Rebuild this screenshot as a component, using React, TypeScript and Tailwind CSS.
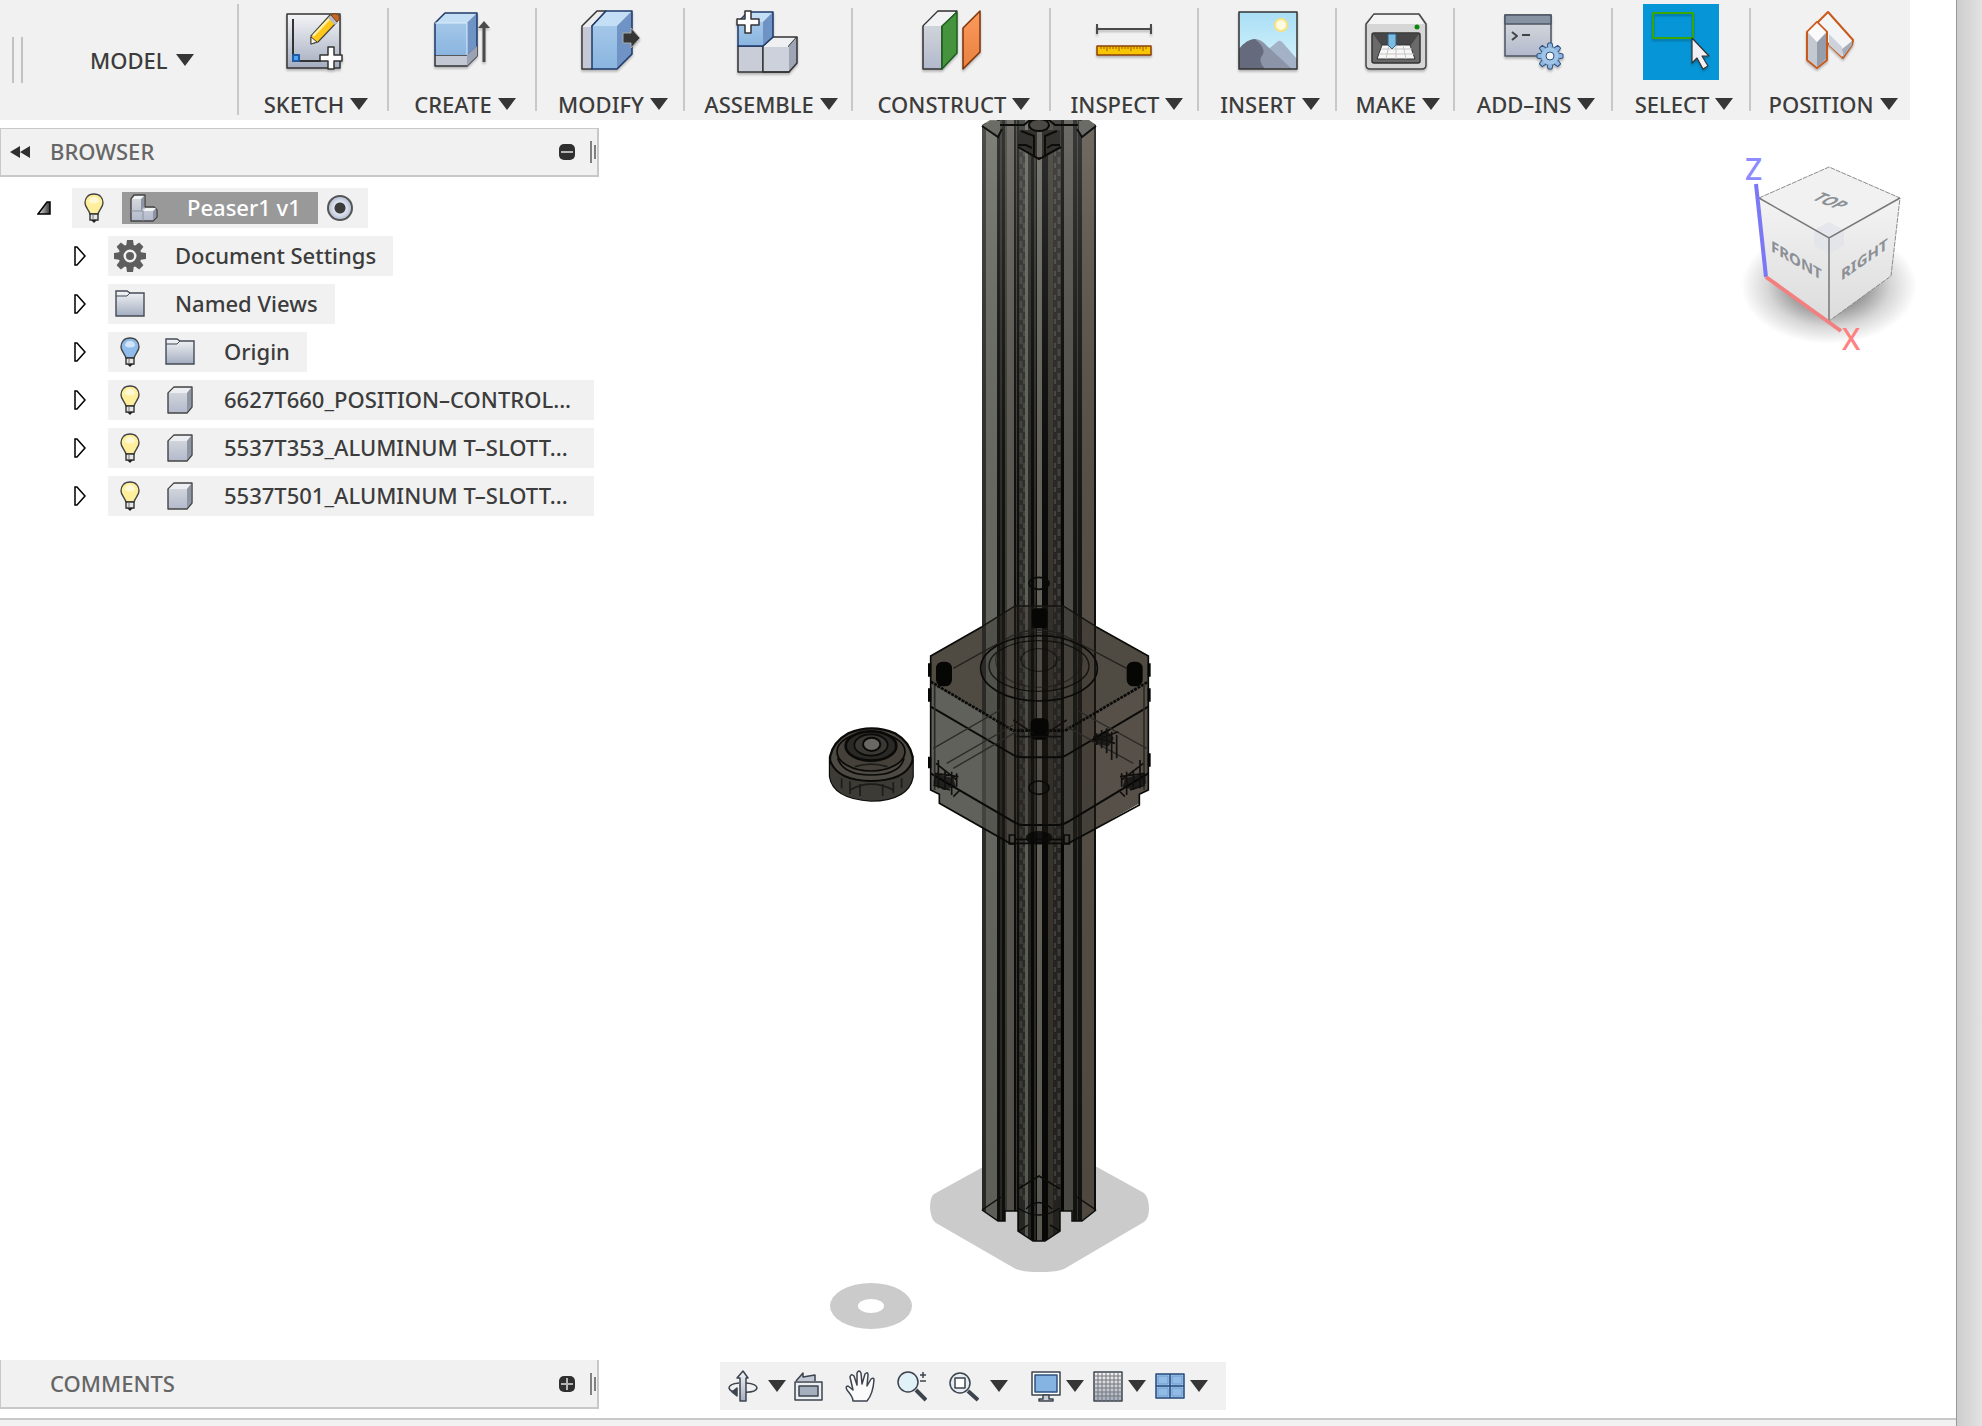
// App.tsx

import type { ReactNode } from "react";

type IconProps = {
  className?: string;
};

type Tool = {
  label: string;
  width: string;
  icon: ReactNode;
  active?: boolean;
};

type TreeRow = {
  label: string;
  icons: ReactNode;
  wide?: boolean;
};

/* =========================================
   SHARED PIECES
========================================= */

function Arrow() {
  return (
    <svg width="18" height="12" viewBox="0 0 18 12" className="shrink-0">
      <path d="M0 0H18L9 12Z" fill="#363636" />
    </svg>
  );
}

function Defs() {
  return (
    <svg width="0" height="0" className="absolute">
      <defs>
        <linearGradient id="steel" x1="0" y1="0" x2="0" y2="1">
          <stop offset="0" stopColor="#f4f5f7" />
          <stop offset="1" stopColor="#a3adc0" />
        </linearGradient>
        <linearGradient id="silver" x1="0" y1="0" x2="0" y2="1">
          <stop offset="0" stopColor="#dadddf" />
          <stop offset="1" stopColor="#b2b9cc" />
        </linearGradient>
        <linearGradient id="blue" x1="0" y1="0" x2="0" y2="1">
          <stop offset="0" stopColor="#a3c7e8" />
          <stop offset="1" stopColor="#8ab5e0" />
        </linearGradient>
        <linearGradient id="sky" x1="0" y1="0" x2="0" y2="1">
          <stop offset="0" stopColor="#a9def5" />
          <stop offset="1" stopColor="#d8f5fc" />
        </linearGradient>
        <linearGradient id="orange" x1="0" y1="0" x2="0" y2="1">
          <stop offset="0" stopColor="#fb9a5d" />
          <stop offset="1" stopColor="#e8803f" />
        </linearGradient>
        <linearGradient id="caret" x1="0" y1="0" x2="1" y2="0">
          <stop offset="0" stopColor="#eeeeee" />
          <stop offset="1" stopColor="#333333" />
        </linearGradient>
        <linearGradient id="shade" x1="0" y1="0" x2="0" y2="1">
          <stop offset="0" stopColor="#ffffff" stopOpacity="0.16" />
          <stop offset="0.5" stopColor="#000000" stopOpacity="0" />
          <stop offset="1" stopColor="#000000" stopOpacity="0.1" />
        </linearGradient>
        <linearGradient id="face" x1="0" y1="0" x2="0" y2="1">
          <stop offset="0" stopColor="#f3f3f3" />
          <stop offset="1" stopColor="#dcdcdc" />
        </linearGradient>
        <radialGradient id="cubeShadow">
          <stop offset="0.3" stopColor="#000000" stopOpacity="0.5" />
          <stop offset="0.7" stopColor="#000000" stopOpacity="0.16" />
          <stop offset="1" stopColor="#000000" stopOpacity="0" />
        </radialGradient>
      </defs>
    </svg>
  );
}

function Big({ children }: { children: ReactNode }) {
  return (
    <svg
      width="76"
      height="76"
      viewBox="0 0 76 76"
      strokeLinejoin="round"
      className="drop-shadow-[0_2px_1px_rgba(0,0,0,0.25)]"
    >
      {children}
    </svg>
  );
}

function Plus({ x, y }: { x: number; y: number }) {
  return (
    <path
      transform={`translate(${x} ${y})`}
      d="M-3-11H3V-3H11V3H3V11H-3V3H-11V-3H-3Z"
      fill="#fff"
      stroke="#333"
      strokeWidth="1.5"
    />
  );
}

/* =========================================
   TOOLBAR ICONS
========================================= */

const sketchIcon = (
  <Big>
    <path d="M12 10H65V64H12Z" fill="url(#steel)" stroke="#333" strokeWidth="1.5" />
    <path d="M18 15V57H46" fill="none" stroke="#333" strokeWidth="2" />
    <path d="M18 51H24V57H18Z" fill="#4fa3f5" stroke="#1d5ca3" strokeWidth="2" />
    <path d="M36 32L55 11L62 18L43 38L36 40Z" fill="#ffc61a" stroke="#444" strokeWidth="1.2" />
    <path d="M38 32L55 14" stroke="#fff3a5" strokeWidth="2.5" />
    <path d="M36 33L42 38L36 40Z" fill="#f5f2dd" stroke="#444" />
    <path d="M53 14L56 11L63 18L60 21Z" fill="#b8bcc4" />
    <path d="M56 11Q61 8 64 12Q66 15 62 18Z" fill="#c6682a" stroke="#7a3c13" />
    <Plus x={56} y={54} />
  </Big>
);

const createIcon = (
  <Big>
    <path d="M11 51H43L53 42V52L43 62H11Z" fill="#c3c7d4" stroke="#333" strokeWidth="1.5" />
    <path d="M43 51L53 42V52L43 62Z" fill="#9ba2b3" />
    <path d="M11 19H43V51H11Z" fill="url(#blue)" />
    <path d="M11 19L21 9H53L43 19Z" fill="#c4def5" />
    <path d="M43 19L53 9V42L43 51Z" fill="#6f93c4" />
    <path d="M11 51V19L21 9H53V42" fill="none" stroke="#1d3a6b" strokeWidth="1.5" />
    <path d="M11 19H43V51" fill="none" stroke="#ddeefa" />
    <path d="M60 58V20" stroke="#4a4a4a" strokeWidth="3" />
    <path d="M54 24L60 17L66 24Z" fill="#4a4a4a" />
  </Big>
);

const modifyIcon = (
  <Big>
    <path d="M10 22L25 7H34L20 22V65H10Z" fill="#ececee" stroke="#333" strokeWidth="1.5" />
    <path d="M11 23H20V64H11Z" fill="#c5c9d5" />
    <path d="M20 22H45V65H20Z" fill="url(#blue)" />
    <path d="M20 22L34 7H60L45 22Z" fill="#c4def5" />
    <path d="M45 22L60 7V50L45 65Z" fill="#6f93c4" />
    <path d="M20 65V22L34 7H60V50L45 65Z" fill="none" stroke="#1d3a6b" strokeWidth="1.5" />
    <path d="M51 29H59V24L68 34L59 44V39H51Z" fill="#363636" stroke="#aaa" strokeWidth="1" />
  </Big>
);

const assembleIcon = (
  <Big>
    <path d="M8 42H33V68H8Z" fill="#c9cdd8" stroke="#333" strokeWidth="1.5" />
    <path d="M33 42L43 33H67L59 42V68H33Z" fill="#eef0f2" stroke="#333" strokeWidth="1.5" />
    <path d="M34 43H59V67H34Z" fill="#cdd1db" />
    <path d="M59 42L67 33V59L59 68Z" fill="#9ea6b5" />
    <path d="M33 68H59L67 59V33" fill="none" stroke="#333" strokeWidth="1.5" />
    <path d="M8 18H33V42H8Z" fill="url(#blue)" />
    <path d="M8 18L18 8H43L33 18Z" fill="#c4def5" />
    <path d="M33 18L43 8V33L33 42Z" fill="#6f93c4" />
    <path d="M8 18V42H33L43 33V8H18Z" fill="none" stroke="#1d3a6b" strokeWidth="1.5" />
    <Plus x={18} y={18} />
  </Big>
);

const constructIcon = (
  <Big>
    <path d="M10 22L25 7H44L29 22V65H10Z" fill="url(#silver)" stroke="#333" strokeWidth="1.5" />
    <path d="M11 22L25 8H43L29 22Z" fill="#f0f2f3" />
    <path d="M29 22L44 8V49L29 65Z" fill="#45933c" stroke="#1c5c1c" strokeWidth="1.5" />
    <path d="M50 24L67 7V48L50 65Z" fill="url(#orange)" stroke="#7d3208" strokeWidth="1.5" />
  </Big>
);

const inspectIcon = (
  <Big>
    <path d="M11 20V30M65 20V30M11 25H65" stroke="#4a4a4a" strokeWidth="2" />
    <path d="M11 42H65V51H11Z" fill="#f7c600" stroke="#8c3f08" strokeWidth="1.5" />
    <path
      d="M15 42V45M18 42V45M21 42V47M24 42V45M27 42V45M30 42V45M33 42V47M36 42V45M39 42V45M42 42V45M45 42V47M48 42V45M51 42V45M54 42V45M57 42V47M60 42V45"
      stroke="#9a5a00"
    />
  </Big>
);

const insertIcon = (
  <Big>
    <path d="M10 8H68V65H10Z" fill="url(#sky)" />
    <circle cx="52" cy="21" r="6" fill="#fffbe0" stroke="#fce27d" strokeWidth="2" />
    <path d="M36 48L48 38Q51 35 54 39L68 55V65H50Z" fill="#a4b2c7" />
    <path d="M10 45Q18 35 26 35Q32 35 38 42L63 65H10Z" fill="#8c95a8" />
    <path d="M10 45Q18 35 26 35Q37 44 34 50Q28 57 36 65H10Z" fill="#656a7c" />
    <path d="M10 8H68V65H10Z" fill="none" stroke="#333" strokeWidth="1.5" />
  </Big>
);

const makeIcon = (
  <Big>
    <path d="M17 10H62L69 20V61Q69 65 65 65H13Q9 65 9 61V20Z" fill="#d6d6d6" stroke="#444" strokeWidth="1.5" />
    <path d="M17 11H61L67 20H11Z" fill="#f4f4f4" />
    <rect x="15" y="29" width="48" height="30" rx="2" fill="#6a6a6a" stroke="#333" strokeWidth="1.5" />
    <path d="M16 30H62L54 41H24Z" fill="#474747" />
    <path d="M25 41H53L58 55H20Z" fill="#f7f7f7" stroke="#333" />
    <path d="M24 45H55M22 50H57M32 41L29 55M39 41V55M46 41L49 55" stroke="#c5c5c5" />
    <path d="M31 30H39V41L35 45L31 41Z" fill="#7cbce0" stroke="#2a6593" />
    <circle cx="60" cy="23" r="2.5" fill="#0b870b" />
  </Big>
);

const teeth = [0, 45, 90, 135, 180, 225, 270, 315];

const addinsIcon = (
  <Big>
    <path d="M10 11H56V52H10Z" fill="url(#silver)" stroke="#4d5563" strokeWidth="1.5" />
    <path d="M10 11H56V20H10Z" fill="#8792a3" stroke="#4d5563" strokeWidth="1.5" />
    <path d="M17 28L22 32L17 36" fill="none" stroke="#444" strokeWidth="2" />
    <path d="M27 31H35" stroke="#444" strokeWidth="2" />
    <g transform="translate(55 52)">
      {teeth.map((angle) => (
        <path
          key={angle}
          d="M-3-8L-2-13H2L3-8Z"
          fill="#8fb6de"
          stroke="#2c5280"
          transform={`rotate(${angle})`}
        />
      ))}
      <circle r="9" fill="#9fc4e8" />
      <circle r="4" fill="#f4f6f8" stroke="#2c5280" />
    </g>
  </Big>
);

const selectIcon = (
  <Big>
    <path d="M10 9H50V34H10Z" fill="none" stroke="#38a800" strokeWidth="2" />
    <path d="M49 34L66 52H59L65 62L60 65L54 54L49 59Z" fill="#f0f0f4" stroke="#333" strokeWidth="1.2" />
  </Big>
);

const positionIcon = (
  <Big>
    <path d="M26 18L36 8L61 36L60 41L51 54L26 30Z" fill="#f3f4f6" stroke="#c9591a" strokeWidth="2" />
    <path d="M37 30L50 43V53L37 41Z" fill="#ced2da" />
    <path d="M50 45L60 37V41L51 53Z" fill="#a7aebb" />
    <path d="M15 28L25 18L35 28V56L25 64L15 56Z" fill="#e4e6ea" stroke="#c9591a" strokeWidth="2" />
    <path d="M16 29L25 38V63L16 55Z" fill="#c3c8d1" />
    <path d="M34 29L25 38V63L34 55Z" fill="#959dab" />
    <path d="M16 28L25 19L34 28L25 38Z" fill="#fafafa" />
  </Big>
);

const tools: Tool[] = [
  { label: "SKETCH", width: "w-[150px]", icon: sketchIcon },
  { label: "CREATE", width: "w-[148px]", icon: createIcon },
  { label: "MODIFY", width: "w-[148px]", icon: modifyIcon },
  { label: "ASSEMBLE", width: "w-[168px]", icon: assembleIcon },
  { label: "CONSTRUCT", width: "w-[198px]", icon: constructIcon },
  { label: "INSPECT", width: "w-[148px]", icon: inspectIcon },
  { label: "INSERT", width: "w-[138px]", icon: insertIcon },
  { label: "MAKE", width: "w-[118px]", icon: makeIcon },
  { label: "ADD–INS", width: "w-[158px]", icon: addinsIcon },
  { label: "SELECT", width: "w-[138px]", icon: selectIcon, active: true },
  { label: "POSITION", width: "w-[160px]", icon: positionIcon },
];

/* =========================================
   TREE ICONS
========================================= */

function Bulb({ color, className }: IconProps & { color: string }) {
  return (
    <svg width="20" height="30" viewBox="0 0 20 30" className={className}>
      <path
        d="M10 1C4 1 1 5 1 10C1 14 5 17 6 21H14C15 17 19 14 19 10C19 5 16 1 10 1Z"
        fill={color}
        stroke="#444"
        strokeWidth="1.4"
      />
      <path d="M5 9Q5 4 10 4Q15 4 15 9Q10 12 5 9Z" fill="#fff" opacity="0.6" />
      <path d="M6 21H14V27H6Z" fill="#e6e6e6" stroke="#333" strokeWidth="1.4" />
      <path d="M9 21V27" stroke="#777" />
      <path d="M7 27H13L10 30Z" fill="#222" />
    </svg>
  );
}

function Folder() {
  return (
    <svg width="30" height="28" viewBox="0 0 30 28">
      <path d="M1 1H12L15 3H29V26H1Z" fill="url(#steel)" stroke="#444b57" strokeWidth="1.4" />
      <path d="M1 6H12L15 3" fill="none" stroke="#444b57" />
    </svg>
  );
}

function Body() {
  return (
    <svg width="26" height="28" viewBox="0 0 26 28" strokeLinejoin="round">
      <path d="M1 7L7 1H25V21L20 27H1Z" fill="url(#silver)" stroke="#444" strokeWidth="1.4" />
      <path d="M2 7L7 2H24L20 7Z" fill="#eceef1" />
      <path d="M20 7L24 2V21L20 26Z" fill="#8e96a6" />
    </svg>
  );
}

function Component() {
  return (
    <svg width="28" height="28" viewBox="0 0 28 28" strokeLinejoin="round">
      <path d="M1 5L4 1H15V13H24L27 16V23L23 27H1Z" fill="url(#silver)" stroke="#444" strokeWidth="1.4" />
      <path d="M2 5L5 2H14L11 5ZM13 17L16 14H26L23 17Z" fill="#f4f5f7" />
      <path d="M11 5L14 2V13L11 17ZM23 17L26 15V23L23 26Z" fill="#8e96a6" />
      <path d="M1 17H13V27" fill="none" stroke="#8a90a0" />
    </svg>
  );
}

function Gear() {
  return (
    <svg width="32" height="32" viewBox="-16 -16 32 32">
      {teeth.map((angle) => (
        <path key={angle} d="M-4-9L-3-16H3L4-9Z" fill="#5e5e5e" transform={`rotate(${angle})`} />
      ))}
      <circle r="9" fill="none" stroke="#5e5e5e" strokeWidth="5" />
      <circle r="4" fill="#5e5e5e" />
    </svg>
  );
}

const bodyIcons = (
  <>
    <Bulb color="#ffee9c" className="mx-3" />
    <span className="ml-[13px] flex w-[30px] justify-center">
      <Body />
    </span>
  </>
);

const rows: TreeRow[] = [
  {
    label: "Document Settings",
    icons: (
      <span className="ml-1.5 flex w-8 justify-center">
        <Gear />
      </span>
    ),
  },
  {
    label: "Named Views",
    icons: (
      <span className="ml-1.5 flex w-8 justify-center">
        <Folder />
      </span>
    ),
  },
  {
    label: "Origin",
    icons: (
      <>
        <Bulb color="#8fbcea" className="mx-3" />
        <span className="ml-[13px] flex w-[30px] justify-center">
          <Folder />
        </span>
      </>
    ),
  },
  { label: "6627T660_POSITION–CONTROL...", icons: bodyIcons, wide: true },
  { label: "5537T353_ALUMINUM T–SLOTT...", icons: bodyIcons, wide: true },
  { label: "5537T501_ALUMINUM T–SLOTT...", icons: bodyIcons, wide: true },
];

function Toolbar() {
  return (
    <header className="flex h-[120px] w-[1910px] shrink-0 bg-[#f1f1f1]">
      <div className="flex w-[237px] items-center pl-3">
        <span className="h-[46px] w-[11px] border-x-2 border-[#c2c2c2]" />
        <button type="button" className="ml-[67px] flex items-center gap-2">
          MODEL
          <Arrow />
        </button>
      </div>

      {tools.map((tool, i) => (
        <div key={tool.label} className={`${tool.width} relative flex justify-center`}>
          <span
            className={
              i === 0
                ? "absolute left-0 top-1 h-[111px] w-0.5 bg-[#c8c8c8]"
                : "absolute left-0 top-2 h-[103px] w-0.5 bg-[#c8c8c8]"
            }
          />
          <button type="button" className="flex flex-col items-center pl-0.5 pt-1">
            <span className={tool.active ? "bg-[#0696d7]" : ""}>{tool.icon}</span>
            <span className="mt-2 flex items-center gap-1.5 pl-1.5 leading-[32px]">
              {tool.label}
              <Arrow />
            </span>
          </button>
        </div>
      ))}
    </header>
  );
}

/* =========================================
   SIDE PANELS
========================================= */

function PanelGrip({ plus }: { plus?: boolean }) {
  return (
    <>
      <button type="button" aria-label={plus ? "Expand" : "Collapse"} className="ml-auto">
        <svg width="16" height="16" viewBox="0 0 16 16">
          <rect width="16" height="16" rx="5" fill="#2f2f2f" />
          <path d={plus ? "M2 8H14M8 2V14" : "M2 8H14"} stroke="#b5b5b5" strokeWidth="2" />
        </svg>
      </button>
      <svg width="6" height="22" viewBox="0 0 6 22" className="ml-[15px] mr-px">
        <path d="M1 0V22" stroke="#808080" strokeWidth="2" />
        <path d="M5 4V18" stroke="#808080" strokeWidth="2" />
      </svg>
    </>
  );
}

function Browser() {
  return (
    <section className="w-[599px]">
      <div className="mt-2 flex h-[49px] items-center border-b-2 border-l border-r-2 border-t border-[#c8c8c8] bg-[#f1f1f1] pl-[9px] text-[#666]">
        <button type="button" aria-label="Hide browser">
          <svg width="20" height="12" viewBox="0 0 20 12">
            <path d="M0 6L10 0V12ZM10 6L20 0V12Z" fill="#2f2f2f" />
          </svg>
        </button>
        <h2 className="ml-5 pb-0.5">BROWSER</h2>
        <PanelGrip />
      </div>

      <ul className="mt-[11px] flex flex-col gap-2">
        <li className="flex h-10 items-center pl-[37px]">
          <svg width="14" height="14" viewBox="0 0 14 14">
            <path d="M1 13L10 1H13V13Z" fill="url(#caret)" stroke="#000" strokeWidth="1.5" />
          </svg>
          <div className="ml-[21px] flex h-10 items-center bg-[#f1f1f1] pl-3 pr-[15px]">
            <Bulb color="#ffee9c" />
            <button
              type="button"
              className="ml-[18px] flex h-8 w-[196px] items-center bg-[#999] pl-2 text-white"
            >
              <Component />
              <span className="ml-[29px] pb-0.5">Peaser1 v1</span>
            </button>
            <input
              type="radio"
              name="active"
              aria-label="Activate Peaser1 v1"
              defaultChecked
              className="ml-[9px] size-[26px] appearance-none rounded-full border-2 border-[#555] bg-[radial-gradient(circle,#3c3c3c_0_5px,#dfe5ef_6px,#b9c3d6_11px)]"
            />
          </div>
        </li>

        {rows.map((row) => (
          <li key={row.label} className="flex h-10 items-center pl-[73px]">
            <svg width="14" height="20" viewBox="0 0 14 20">
              <path d="M2 1H4L12 10L4 19H2Z" fill="#fff" stroke="#000" strokeWidth="1.5" />
            </svg>
            <button
              type="button"
              className={
                row.wide
                  ? "ml-[21px] flex h-10 w-[486px] items-center bg-[#f1f1f1]"
                  : "ml-[21px] flex h-10 items-center bg-[#f1f1f1] pr-[17px]"
              }
            >
              {row.icons}
              <span className="ml-[29px] whitespace-nowrap pb-0.5">{row.label}</span>
            </button>
          </li>
        ))}
      </ul>
    </section>
  );
}

/* =========================================
   NAVIGATION BAR
========================================= */

function Small({ children }: { children: ReactNode }) {
  return (
    <svg
      width="30"
      height="32"
      viewBox="0 0 30 32"
      fill="none"
      stroke="#3d444e"
      strokeWidth="1.5"
      strokeLinejoin="round"
      className="shrink-0"
    >
      {children}
    </svg>
  );
}

function NavBar() {
  return (
    <nav className="mt-0.5 flex h-12 w-[506px] items-center bg-[#f1f1f1] pl-2">
      <button type="button" aria-label="Orbit" className="flex items-center gap-2.5">
        <Small>
          <path d="M11 13Q1 14 1 18Q2 22 9 22M18 13Q29 14 29 18Q28 23 14 22" />
          <path d="M9 18V26L4 22Z" fill="#3d444e" />
          <path d="M12 31V8H9L15 1L20 8H18V31Z" fill="url(#steel)" />
        </Small>
        <Arrow />
      </button>
      <button type="button" aria-label="Look at" className="ml-2">
        <Small>
          <path d="M2 11L9 3V7L21 5V11" fill="#c3c9d4" />
          <path d="M1 12H28V30H1Z" fill="#eceef2" />
          <path d="M5 16H24V26H5Z" fill="#a5aebd" />
        </Small>
      </button>
      <button type="button" aria-label="Pan" className="ml-[21px]">
        <Small>
          <path
            d="M8 31Q8 27 2 20Q0 16 3 16L8 20L5 7Q6 3 9 6L12 15L12 3Q14-1 16 3L17 14L20 4Q23 1 23 5L22 16L26 9Q29 7 29 10Q28 24 22 31Z"
            fill="#fbfbfc"
          />
        </Small>
      </button>
      <button type="button" aria-label="Zoom" className="ml-[22px]">
        <Small>
          <circle cx="11" cy="12" r="10" fill="#e1f1f8" />
          <path d="M19 20L29 30" strokeWidth="4" />
          <path d="M23 5H29M26 2V8M23 11H29" />
        </Small>
      </button>
      <button type="button" aria-label="Fit" className="ml-[22px] flex items-center gap-[11px]">
        <Small>
          <circle cx="11" cy="13" r="10" fill="#e7edf2" />
          <path d="M6 8H16V18H6Z" fill="#fff" />
          <path d="M19 21L29 30" strokeWidth="4" />
        </Small>
        <Arrow />
      </button>
      <button type="button" aria-label="Display settings" className="ml-[23px] flex items-center gap-[5px]">
        <Small>
          <path d="M1 2H29V25H1Z" fill="#fff" />
          <path d="M4 5H26V22H4Z" fill="#85b3e2" stroke="#2c5280" />
          <path d="M12 25H18V29H22V31H8V29H12Z" fill="#c8cdd6" />
        </Small>
        <Arrow />
      </button>
      <button type="button" aria-label="Grid and snaps" className="ml-[9px] flex items-center gap-[5px]">
        <Small>
          <path d="M1 2H29V31H1Z" fill="url(#steel)" />
          <path
            d="M5 2V31M9 2V31M13 2V31M17 2V31M21 2V31M25 2V31M1 6H29M1 10H29M1 14H29M1 18H29M1 22H29M1 26H29"
            strokeWidth="1"
            stroke="#777"
          />
        </Small>
        <Arrow />
      </button>
      <button type="button" aria-label="Viewports" className="ml-[9px] flex items-center gap-[5px]">
        <Small>
          <path d="M1 4H29V28H1Z" fill="#a6caec" stroke="#24487a" />
          <path d="M3 6H13V14H3ZM17 6H27V14H17ZM3 18H13V26H3ZM17 18H27V26H17Z" fill="#92bce6" stroke="#6c9cd0" strokeWidth="1" />
          <path d="M15 4V28M1 16H29" stroke="#24487a" />
        </Small>
        <Arrow />
      </button>
    </nav>
  );
}

/* =========================================
   3D MODEL
========================================= */

// x, width, colour of each vertical face of the T-slot profile
const stripes: [number, number, string][] = [
  [982, 4, "#2c2c28"],
  [986, 11, "#666861"],
  [997, 8, "#0f0f0d"],
  [1000, 2, "#2a2a26"],
  [1005, 2, "#3b3b36"],
  [1007, 7, "#59574f"],
  [1014, 5, "#0c0c0a"],
  [1016, 1, "#3b3a35"],
  [1019, 6, "#2a2a27"],
  [1025, 3, "#5f605a"],
  [1028, 3, "#252521"],
  [1031, 6, "#080807"],
  [1034, 2, "#2c2b27"],
  [1037, 5, "#64625b"],
  [1042, 6, "#080807"],
  [1048, 5, "#39352e"],
  [1053, 8, "#262522"],
  [1061, 3, "#050504"],
  [1064, 9, "#504e48"],
  [1073, 9, "#141412"],
  [1077, 1, "#393833"],
  [1082, 12, "#564f47"],
  [1094, 2, "#0d0d0b"],
];

function Model() {
  return (
    <svg
      width="360"
      height="1220"
      viewBox="820 120 360 1220"
      className="absolute left-[820px] top-0"
      fill="none"
    >
      <defs>
        <clipPath id="profile">
          <path d="M982 125L990 120H1089L1096 125V1210L1082 1221H1072V1211H1060V1231L1045 1241H1033L1018 1231V1211H1005V1221H998L982 1210Z" />
        </clipPath>
      </defs>

      {/* ground shadows */}
      <path
        d="M983 1167L934 1194Q930 1197 930 1208Q931 1220 936 1223L1014 1268Q1020 1272 1039 1272Q1058 1272 1064 1269L1144 1222Q1149 1218 1149 1209Q1149 1198 1144 1193L1097 1167Z"
        fill="#cbcbcb"
      />
      <ellipse cx="871" cy="1306" rx="41" ry="23" fill="#cbcbcb" />
      <ellipse cx="871" cy="1306" rx="13" ry="7" fill="#fff" />

      {/* profile */}
      <g clipPath="url(#profile)">
        {stripes.map(([x, w, color]) => (
          <rect key={x} x={x} y="120" width={w} height="1125" fill={color} />
        ))}
        <path d="M1021 145V1200M1059 145V1200" stroke="#3f3f3b" strokeWidth="3" strokeDasharray="7 5" />
        <path d="M1024 151V1200M1055 151V1200" stroke="#42423d" strokeWidth="2" strokeDasharray="5 7" />
        <rect x="982" y="120" width="115" height="1125" fill="url(#shade)" />
      </g>
      <path
        d="M982 1210L998 1221H1005V1211H1018V1231L1033 1241H1045L1060 1231V1211H1072V1221H1082L1096 1210M982 1210L1001 1197M1096 1210L1077 1197M1018 1189L1039 1176L1060 1189M1018 1208Q1039 1222 1060 1208M1019 1231L1028 1225M1060 1231L1050 1225M1026 1209Q1039 1196 1052 1209"
        stroke="#0c0c0a"
        strokeWidth="1.5"
      />
      <path d="M982 126L990 121H1000V134L998 137ZM1096 126L1089 121H1079V134L1082 137Z" fill="#6b6c65" />
      <path d="M982 126L998 137L1002 129M1096 126L1082 137L1077 129" stroke="#111" strokeWidth="2" />
      <path d="M1000 125H1024L1030 120H1049L1055 125H1078" stroke="#0c0c0a" strokeWidth="2" />
      <path d="M1019 130H1060V147L1039 159L1019 147Z" fill="#33322e" />
      <path d="M1018 147L1039 159L1061 147M1018 145H1026L1032 148M1060 145H1052L1047 148M1021 131L1034 136V156M1057 131L1045 136V156" stroke="#0c0c0a" strokeWidth="2" />
      <path d="M1037 132H1042V157H1037Z" fill="#6a6861" />
      <ellipse cx="1039" cy="125" rx="10" ry="6" fill="#4b4a45" stroke="#0c0c0a" strokeWidth="2" />

      {/* motor and pulley, drawn on a three times finer grid */}
      <g transform="translate(800 560) scale(0.333333)" stroke="#0a0a08" strokeWidth="5">
        <path
          d="M546 200L392 288V690L418 703V730L546 803V200ZM888 200L1045 288V690L1018 703V730L888 803Z"
          fill="#4f4a42"
          stroke="none"
        />
        <path d="M392 370L546 458V803L418 730V703L392 690Z" fill="#60615b" stroke="none" />
        <path d="M888 458L1045 370V690L1018 703V730L888 803Z" fill="#575049" stroke="none" />
        <path d="M546 200L645 138H790L888 200V803L805 850H630L546 803Z" fill="#2a2723" stroke="none" opacity="0.35" />
        <path d="M546 458L592 484V828L546 803Z" fill="#5c5d57" opacity="0.5" stroke="none" />
        <path d="M546 200L392 288V690L418 703V730L630 850H805L1018 735V703L1045 690V288L888 200" />
        <path d="M546 200L645 138H790L888 200" stroke="#141310" strokeWidth="4" />
        <path d="M460 325L640 225Q717 195 790 225L980 325" stroke="#22211d" strokeWidth="4" />
        <path d="M392 365L640 512H795L1045 365" strokeWidth="8" strokeDasharray="9 3" />
        <path d="M392 440L640 585Q650 592 670 592H775Q790 592 800 585L1045 440" strokeWidth="6" />
        <path d="M392 640L640 785Q655 795 670 795H775Q790 795 805 785L1045 640" strokeWidth="6" />
        <path d="M400 565L600 450M440 610L640 495M460 625L650 515M1040 565L830 450M1000 610L800 500" stroke="#2b2a26" strokeWidth="4" />
        <path d="M404 375V690M1032 375V690" stroke="#2b2a26" />
        <ellipse cx="717" cy="325" rx="175" ry="98" />
        <ellipse cx="717" cy="318" rx="150" ry="76" strokeWidth="4" opacity="0.8" />
        <ellipse cx="717" cy="300" rx="130" ry="82" stroke="#1b1a17" strokeWidth="4" opacity="0.6" />
        <ellipse cx="717" cy="300" rx="54" ry="34" strokeWidth="4" opacity="0.6" />
        <ellipse cx="717" cy="70" rx="30" ry="18" />
        <ellipse cx="717" cy="683" rx="30" ry="20" />
        <g fill="#060605" stroke="none">
          <rect x="408" y="305" width="48" height="74" rx="20" />
          <rect x="980" y="305" width="48" height="74" rx="20" />
          <rect x="696" y="145" width="46" height="60" rx="12" />
          <rect x="692" y="475" width="54" height="64" rx="16" />
          <ellipse cx="717" cy="833" rx="40" ry="20" opacity="0.8" />
          <path d="M384 310H394V350H384ZM384 385H394V425H384ZM384 590H394V625H384ZM1043 310H1052V350H1043ZM1043 385H1052V425H1043ZM1043 580H1052V620H1043Z" />
          <path d="M880 530L920 510L942 535L925 560L890 550Z" opacity="0.7" />
          <path d="M405 640L460 655L468 680L430 690L400 670ZM1035 640L975 655L968 680L1000 690L1038 670Z" opacity="0.7" />
        </g>
        <path d="M875 545L955 515M880 530L945 550M905 510V565M920 505V580M935 515V600M950 525V595M890 520V555M640 480L700 520M740 520L800 480M650 530H790" stroke="#11100e" />
        <path d="M408 610L470 660M405 640L475 650M415 600V685M435 630V690M455 635V705M400 675L450 690M470 640V680M460 710L480 690" stroke="#11100e" />
        <path d="M1030 610L965 660M1035 640L960 650M1020 600V685M1000 630V690M980 635V705M1035 675L990 690M965 640V680M975 710L955 690" stroke="#11100e" />
        <path d="M628 825H645V852H628ZM792 825H808V852H792ZM645 838H792" />

        <path d="M90 590Q100 545 145 520Q215 490 285 520Q328 545 338 590V650Q325 720 213 722Q100 715 90 650Z" fill="#4d4943" strokeWidth="7" />
        <path d="M90 610Q110 662 213 663Q320 662 338 610V650Q325 720 213 722Q100 715 90 650Z" fill="#3c3b36" stroke="none" />
        <path d="M90 600Q110 662 213 663Q320 662 338 600" strokeWidth="6" />
        <ellipse cx="213" cy="575" rx="102" ry="58" fill="#45413a" />
        <path d="M113 595Q130 645 213 645Q300 645 312 595" />
        <ellipse cx="213" cy="558" rx="76" ry="44" fill="#2b2925" strokeWidth="8" />
        <ellipse cx="213" cy="555" rx="50" ry="32" fill="#3a3833" />
        <ellipse cx="215" cy="553" rx="26" ry="20" fill="#6a6862" strokeWidth="6" />
        <path d="M125 655V685M150 664V702M180 672V708M248 672V708M280 666V700M305 655V685" stroke="#1d1c19" />
        <path d="M150 690Q213 655 280 690M165 620Q213 605 262 620" stroke="#1d1c19" />
      </g>
    </svg>
  );
}

function ViewCube() {
  return (
    <svg
      width="190"
      height="230"
      viewBox="1730 140 190 230"
      className="absolute right-[36px] top-5"
      fontFamily="Noto Sans"
    >
      <ellipse cx="1829" cy="286" rx="88" ry="58" fill="url(#cubeShadow)" />
      <path d="M1759 198L1829 167L1900 198L1829 238Z" fill="#f1f1f1" />
      <path d="M1759 198L1829 238V321L1767 277Z" fill="url(#face)" />
      <path d="M1900 198L1829 238V321L1891 276Z" fill="url(#face)" />
      <path d="M1829 222L1844 230V245L1829 254L1814 245V230Z" fill="#dfe3ea" opacity="0.7" />
      <path
        d="M1759 198L1829 167L1900 198L1891 276L1829 321L1767 277"
        fill="none"
        stroke="#8c8c8c"
        strokeDasharray="5 1"
      />
      <path d="M1759 198L1829 238L1900 198M1829 238V321" fill="none" stroke="#777" strokeWidth="1.5" />
      <path d="M1756 184L1766 277" stroke="#7a78f5" strokeWidth="4" />
      <path d="M1766 277L1841 331" stroke="#f28080" strokeWidth="4" />
      <text x="1745" y="180" fontSize="30" fill="#8d8bff">
        Z
      </text>
      <text x="1842" y="350" fontSize="30" fill="#ff8080">
        X
      </text>
      <g fontSize="15" fill="#8b9096" fontWeight="bold">
        <text transform="translate(1771 251) skewY(30)">FRONT</text>
        <text transform="translate(1841 281) skewY(-35)">RIGHT</text>
        <text transform="translate(1811 199) rotate(22) skewX(-38)">TOP</text>
      </g>
    </svg>
  );
}

export default function App() {
  return (
    <div className="flex min-h-screen bg-white font-['Noto_Sans',sans-serif] text-[22px] font-medium leading-[30px] text-[#3c3c3c]">
      <Defs />

      <div className="flex min-w-0 flex-1 flex-col">
        <Toolbar />

        <main className="relative flex flex-1 flex-col">
          <Model />
          <ViewCube />
          <Browser />

          <div className="mt-auto flex h-[58px] items-start gap-[121px]">
            <section className="flex h-[49px] w-[599px] items-center border-b-2 border-l border-r-2 border-[#c8c8c8] bg-[#f1f1f1] pl-[49px] text-[#666]">
              <h2 className="pb-0.5">COMMENTS</h2>
              <PanelGrip plus />
            </section>
            <NavBar />
          </div>
        </main>

        <footer className="h-2 border-t-2 border-[#c8c8c8] bg-[#f1f1f1]" />
      </div>

      {/* window edge with the desktop behind it */}
      <aside className="w-[26px] shrink-0 border-l border-[#999] bg-linear-to-r from-[#cdcdcd] to-[#e2e2e2]" />
    </div>
  );
}
